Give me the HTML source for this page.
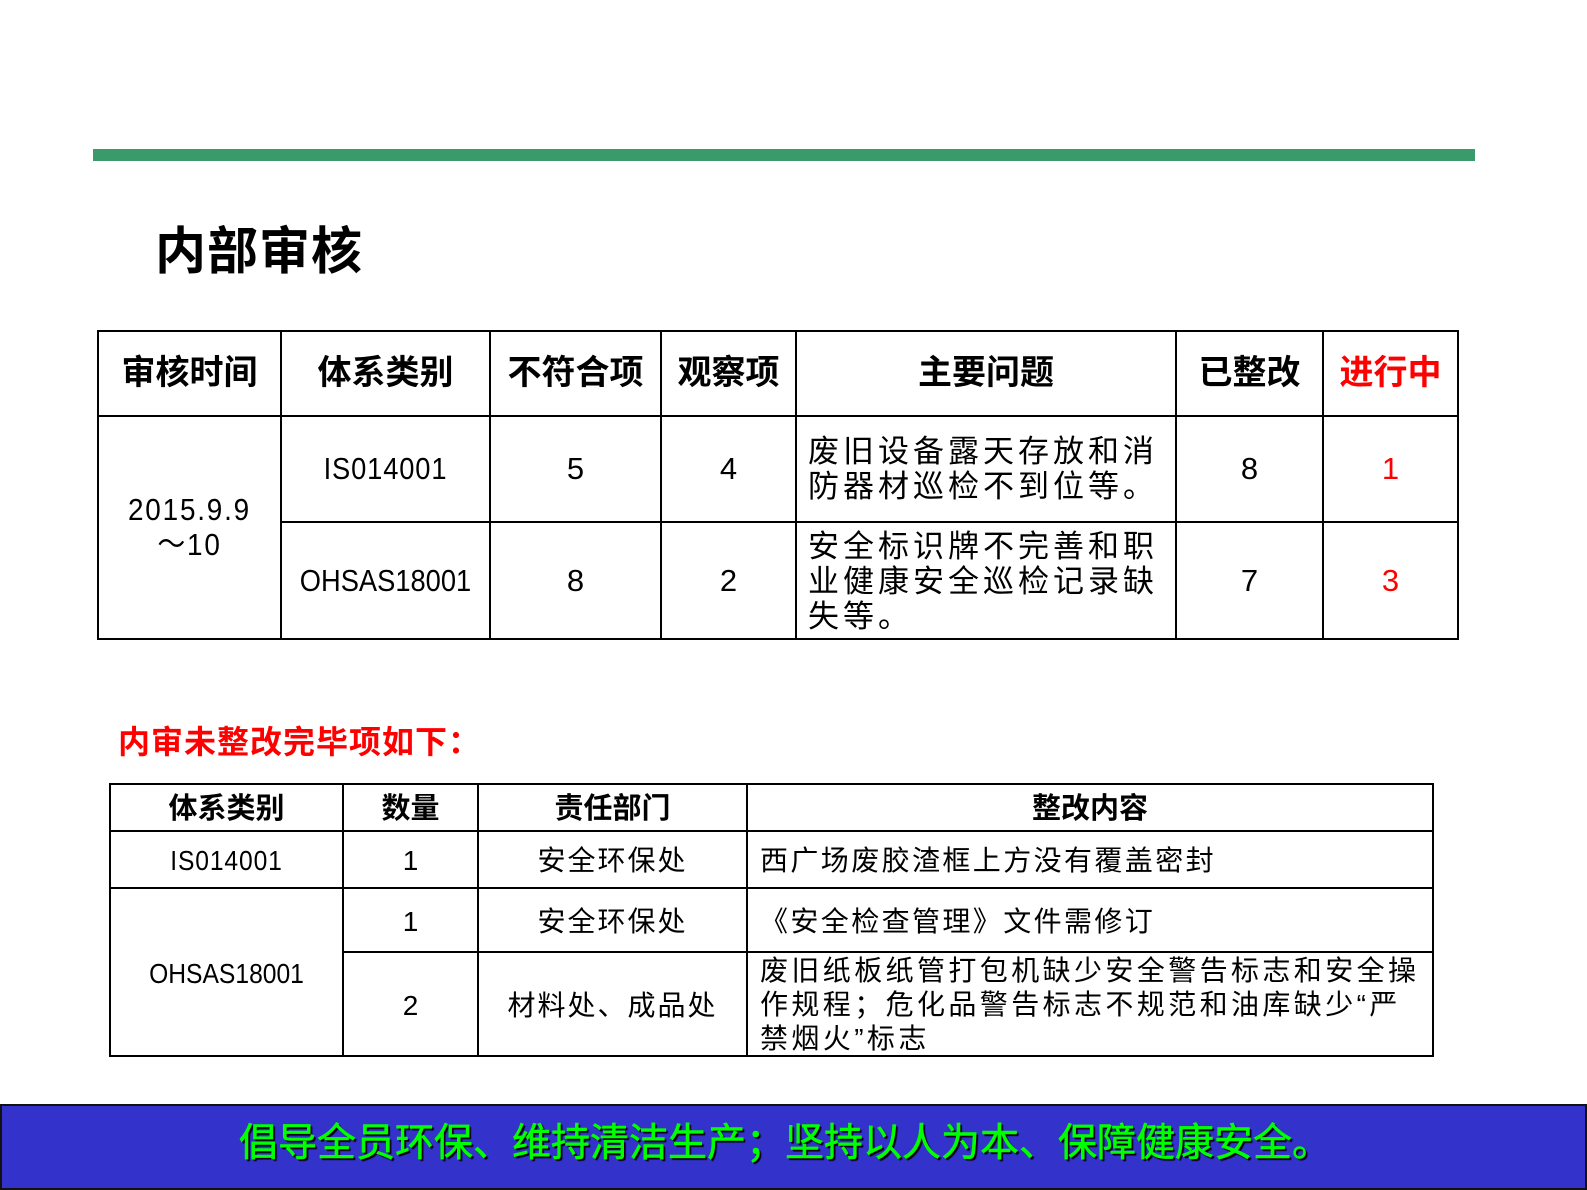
<!DOCTYPE html>
<html><head><meta charset="utf-8"><style>
*{margin:0;padding:0;box-sizing:border-box}
body{width:1587px;height:1190px;background:#fff;position:relative;overflow:hidden;font-family:"Liberation Sans","Noto Sans CJK SC",sans-serif;color:#000}
.a{position:absolute}
.h{position:absolute;background:#000}
.c{position:absolute;text-align:center;white-space:nowrap}
.b{font-weight:bold}
.red{color:#f00}
</style></head><body>
<div class="a" style="left:93px;top:149px;width:1382px;height:12px;background:#3a9a6a"></div>
<div class="a b" style="left:155px;top:222px;font-size:51px;line-height:60px;letter-spacing:1px">内部审核</div>

<!-- table 1 lines -->
<div class="h" style="left:97px;top:330px;width:1362px;height:2px"></div>
<div class="h" style="left:97px;top:415px;width:1362px;height:2px"></div>
<div class="h" style="left:281px;top:521px;width:1178px;height:2px"></div>
<div class="h" style="left:97px;top:638px;width:1362px;height:2px"></div>
<div class="h" style="left:97px;top:330px;width:2px;height:310px"></div>
<div class="h" style="left:280px;top:330px;width:2px;height:310px"></div>
<div class="h" style="left:489px;top:330px;width:2px;height:310px"></div>
<div class="h" style="left:660px;top:330px;width:2px;height:310px"></div>
<div class="h" style="left:795px;top:330px;width:2px;height:310px"></div>
<div class="h" style="left:1175px;top:330px;width:2px;height:310px"></div>
<div class="h" style="left:1322px;top:330px;width:2px;height:310px"></div>
<div class="h" style="left:1457px;top:330px;width:2px;height:310px"></div>

<div class="c b" style="left:99px;width:181px;top:352px;font-size:34px;line-height:42px">审核时间</div>
<div class="c b" style="left:282px;width:207px;top:352px;font-size:34px;line-height:42px">体系类别</div>
<div class="c b" style="left:491px;width:169px;top:352px;font-size:34px;line-height:42px">不符合项</div>
<div class="c b" style="left:662px;width:133px;top:352px;font-size:34px;line-height:42px">观察项</div>
<div class="c b" style="left:797px;width:378px;top:352px;font-size:34px;line-height:42px">主要问题</div>
<div class="c b" style="left:1177px;width:145px;top:352px;font-size:34px;line-height:42px">已整改</div>
<div class="c b red" style="left:1324px;width:133px;top:352px;font-size:34px;line-height:42px">进行中</div>

<div class="c" style="left:99px;width:181px;top:492px;font-size:31px;line-height:35px;transform:scaleX(0.9);letter-spacing:2px">2015.9.9<br>～10</div>
<div class="c" style="left:282px;width:207px;top:451px;font-size:31px;line-height:36px;transform:scaleX(0.88);letter-spacing:1px">IS014001</div>
<div class="c" style="left:282px;width:207px;top:563px;font-size:31px;line-height:36px;transform:scaleX(0.88)">OHSAS18001</div>
<div class="c" style="left:491px;width:169px;top:451px;font-size:31px;line-height:36px">5</div>
<div class="c" style="left:491px;width:169px;top:563px;font-size:31px;line-height:36px">8</div>
<div class="c" style="left:662px;width:133px;top:451px;font-size:31px;line-height:36px">4</div>
<div class="c" style="left:662px;width:133px;top:563px;font-size:31px;line-height:36px">2</div>
<div class="c" style="left:1177px;width:145px;top:451px;font-size:31px;line-height:36px">8</div>
<div class="c" style="left:1177px;width:145px;top:563px;font-size:31px;line-height:36px">7</div>
<div class="c red" style="left:1324px;width:133px;top:451px;font-size:31px;line-height:36px">1</div>
<div class="c red" style="left:1324px;width:133px;top:563px;font-size:31px;line-height:36px">3</div>
<div class="a" style="left:808px;top:434px;font-size:31px;line-height:35px;letter-spacing:4px;white-space:nowrap">废旧设备露天存放和消<br>防器材巡检不到位等。</div>
<div class="a" style="left:808px;top:529px;font-size:31px;line-height:35px;letter-spacing:4px;white-space:nowrap">安全标识牌不完善和职<br>业健康安全巡检记录缺<br>失等。</div>

<div class="a b red" style="left:118px;top:722px;font-size:32px;line-height:40px;letter-spacing:1px">内审未整改完毕项如下：</div>

<!-- table 2 -->
<div class="h" style="left:109px;top:783px;width:1325px;height:2px"></div>
<div class="h" style="left:109px;top:830px;width:1325px;height:2px"></div>
<div class="h" style="left:109px;top:887px;width:1325px;height:2px"></div>
<div class="h" style="left:343px;top:951px;width:1091px;height:2px"></div>
<div class="h" style="left:109px;top:1055px;width:1325px;height:2px"></div>
<div class="h" style="left:109px;top:783px;width:2px;height:274px"></div>
<div class="h" style="left:342px;top:783px;width:2px;height:274px"></div>
<div class="h" style="left:477px;top:783px;width:2px;height:274px"></div>
<div class="h" style="left:746px;top:783px;width:2px;height:274px"></div>
<div class="h" style="left:1432px;top:783px;width:2px;height:274px"></div>

<div class="c b" style="left:111px;width:231px;top:791px;font-size:29px;line-height:36px">体系类别</div>
<div class="c b" style="left:344px;width:133px;top:791px;font-size:29px;line-height:36px">数量</div>
<div class="c b" style="left:479px;width:267px;top:791px;font-size:29px;line-height:36px">责任部门</div>
<div class="c b" style="left:748px;width:684px;top:791px;font-size:29px;line-height:36px">整改内容</div>

<div class="c" style="left:111px;width:231px;top:843px;font-size:28px;line-height:36px;transform:scaleX(0.88);letter-spacing:1px">IS014001</div>
<div class="c" style="left:344px;width:133px;top:843px;font-size:28px;line-height:36px">1</div>
<div class="c" style="left:479px;width:267px;top:843px;font-size:28px;line-height:36px;letter-spacing:2px">安全环保处</div>
<div class="a" style="left:760px;top:843px;font-size:28px;line-height:36px;letter-spacing:2.4px;white-space:nowrap">西广场废胶渣框上方没有覆盖密封</div>

<div class="c" style="left:111px;width:231px;top:956px;font-size:28px;line-height:36px;transform:scaleX(0.88)">OHSAS18001</div>
<div class="c" style="left:344px;width:133px;top:904px;font-size:28px;line-height:36px">1</div>
<div class="c" style="left:479px;width:267px;top:904px;font-size:28px;line-height:36px;letter-spacing:2px">安全环保处</div>
<div class="a" style="left:760px;top:904px;font-size:28px;line-height:36px;letter-spacing:2.4px;white-space:nowrap">《安全检查管理》文件需修订</div>

<div class="c" style="left:344px;width:133px;top:988px;font-size:28px;line-height:36px">2</div>
<div class="c" style="left:479px;width:267px;top:988px;font-size:28px;line-height:36px;letter-spacing:2px">材料处、成品处</div>
<div class="a" style="left:760px;top:954px;font-size:28px;line-height:34px;letter-spacing:3.4px;white-space:nowrap">废旧纸板纸管打包机缺少安全警告标志和安全操<br>作规程；危化品警告标志不规范和油库缺少“严<br>禁烟火”标志</div>

<!-- footer -->
<div class="a" style="left:0;top:1104px;width:1587px;height:86px;background:#3333cc;border:2px solid #111"></div>
<div class="c" style="left:0;width:1570px;top:1119px;font-size:39px;line-height:50px;color:#00ff00;text-shadow:2px 2px 1px #000;-webkit-text-stroke:0.6px #00ff00">倡导全员环保、维持清洁生产；坚持以人为本、保障健康安全。</div>
</body></html>
